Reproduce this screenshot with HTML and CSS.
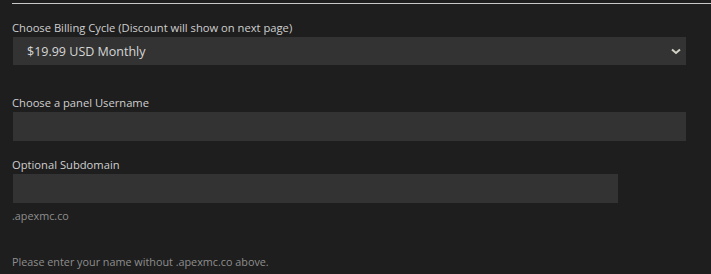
FILE: index.html
```html
<!DOCTYPE html>
<html>
<head>
<meta charset="utf-8">
<link rel="stylesheet" href="styles.css">
</head>
<body>
<div class="page">
  <hr class="divider">
  <div class="group group-first">
    <label class="label">Choose Billing Cycle (Discount will show on next page)</label>
    <div class="select">
      <span class="select-text">$19.99 USD Monthly</span>
      <svg class="chevron" width="10" height="7" viewBox="0 0 10 7"><path d="M1 1.5 L5 5 L9 1.5" fill="none" stroke="#d2d2c6" stroke-width="2"/></svg>
    </div>
  </div>
  <div class="group group-user">
    <label class="label">Choose a panel Username</label>
    <div class="input"></div>
  </div>
  <div class="group group-sub">
    <label class="label">Optional Subdomain</label>
    <div class="input input-short"></div>
    <div class="suffix">.apexmc.co</div>
  </div>
  <p class="help">Please enter your name without .apexmc.co above.</p>
</div>
</body>
</html>
```
FILE: styles.css
```css
html, body {
  margin: 0;
  padding: 0;
  background: #1e1e1e;
}
body {
  font-family: "Open Sans", "Noto Sans", sans-serif;
  color: #cfcfcf;
  width: 711px;
  height: 274px;
  overflow: hidden;
}
.page {
  padding: 3px 0 0 12px;
}
.divider {
  margin: 0;
  border: 0;
  height: 1px;
  background: #c8c8c8;
}
.group {
  display: flex;
  flex-direction: column;
}
.group-first {
  margin-top: 15px;
}
.group-user {
  margin-top: 29px;
}
.group-sub {
  margin-top: 15px;
}
.label {
  font-size: 11.2px;
  line-height: 17px;
  margin-bottom: 1px;
}
.select {
  margin-left: 1px;
  width: 673px;
  height: 28px;
  background: #333333;
  display: flex;
  align-items: center;
  justify-content: space-between;
  box-sizing: border-box;
  padding: 0 5px 0 14px;
}
.select-text {
  font-size: 12.5px;
  color: #d6d6d6;
}
.chevron {
  display: block;
  margin-top: 1px;
}
.input {
  margin-left: 1px;
  width: 673px;
  height: 29px;
  background: #333333;
}
.input-short {
  width: 605px;
}
.suffix {
  font-size: 10.8px;
  line-height: 16px;
  margin-top: 5px;
  color: #8e8e8e;
}
.help {
  margin: 30px 0 0 0;
  font-size: 10.8px;
  line-height: 16px;
  color: #8e8e8e;
}
```
